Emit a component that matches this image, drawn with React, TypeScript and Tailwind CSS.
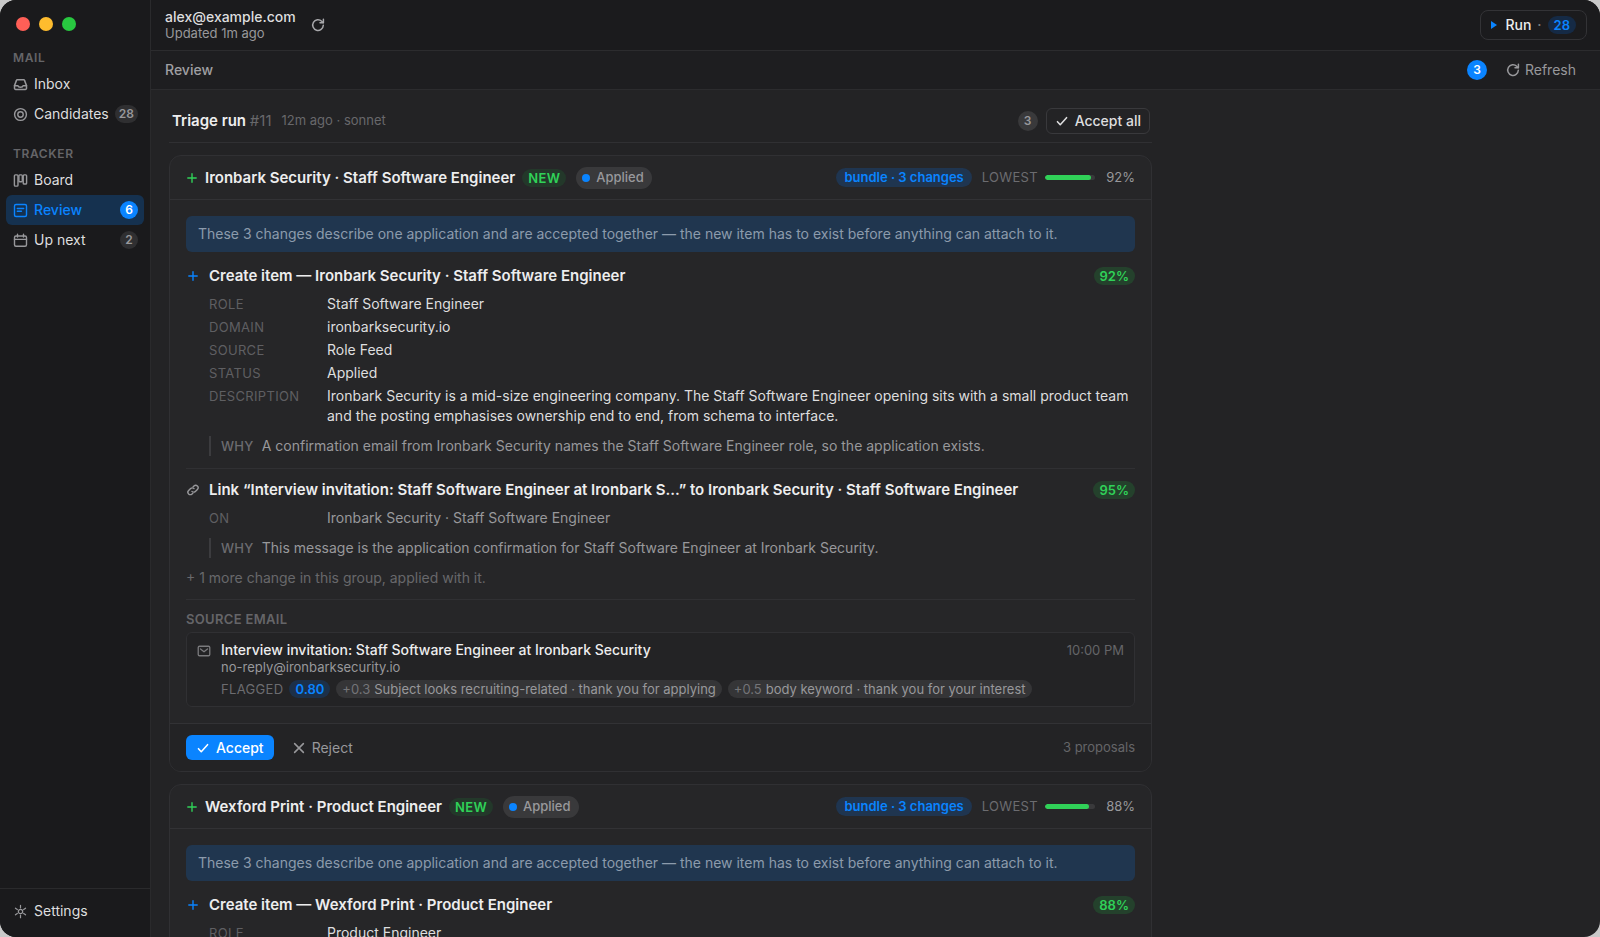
import type { ReactNode } from "react";

type IconProps = { className?: string };

function Glyph({ className, children, width = 1.5 }: IconProps & { children: ReactNode; width?: number }) {
  return (
    <svg
      viewBox="0 0 16 16"
      fill="none"
      stroke="currentColor"
      strokeWidth={width}
      strokeLinecap="round"
      strokeLinejoin="round"
      aria-hidden="true"
      className={`shrink-0 ${className ?? "size-[15px]"}`}
    >
      {children}
    </svg>
  );
}

const InboxIcon = () => (
  <Glyph width={1.6}>
    <path d="M1.600 9.200 3.700 3.600a1 1 0 0 1 .9-.7h6.800a1 1 0 0 1 .9.700L14.400 9.200V12a1.200 1.200 0 0 1-1.200 1.200H2.800A1.200 1.200 0 0 1 1.600 12Z" />
    <path d="M1.600 9.200h3.600c.3 1.200 1.200 1.800 2.800 1.800s2.500-.6 2.800-1.800h3.600" />
  </Glyph>
);
const TargetIcon = () => (
  <Glyph>
    <circle cx="8" cy="8" r="6.300" />
    <circle cx="8" cy="8" r="2.900" />
  </Glyph>
);
const BoardIcon = () => (
  <Glyph>
    <rect x="1.500" y="2" width="3.800" height="12" rx="1" />
    <rect x="6.300" y="2" width="3.600" height="7.400" rx="1" />
    <rect x="10.900" y="2" width="3.600" height="9.800" rx="1" />
  </Glyph>
);
const ReviewIcon = () => (
  <Glyph>
    <rect x="1.600" y="1.600" width="12.800" height="12.800" rx="1.600" />
    <path d="M4.600 5.900h6.800M4.600 8.800h4.400" />
  </Glyph>
);
const CalendarIcon = () => (
  <Glyph>
    <rect x="1.600" y="3.200" width="12.800" height="11" rx="1.600" />
    <path d="M1.600 6.800h12.800M4.800 1.400v2.800M11.200 1.400v2.800" />
  </Glyph>
);
const GearIcon = () => (
  <Glyph width={1.3}>
    <circle cx="8" cy="8" r="2.300" />
    <path d="M8 1.400v2.700M8 11.900v2.700M2.600 4.500l2 1.400M11.400 10.100l2 1.400M2.600 11.500l2-1.400M11.400 5.900l2-1.400" />
  </Glyph>
);
const RefreshIcon = ({ className }: IconProps) => (
  <Glyph className={className}>
    <path d="M13.300 8.300A5.300 5.300 0 1 1 11.700 4.300L13.200 5.600" />
    <path d="M13.400 2.300v3.400H10" />
  </Glyph>
);
const PlusIcon = ({ className }: IconProps) => (
  <Glyph className={className} width={1.6}>
    <path d="M8 3.200v9.600M3.200 8h9.600" />
  </Glyph>
);
const CheckIcon = ({ className }: IconProps) => (
  <Glyph className={className} width={1.8}>
    <path d="m2.800 8.800 3.200 3.400 7.200-8" />
  </Glyph>
);
const CrossIcon = ({ className }: IconProps) => (
  <Glyph className={className} width={1.8}>
    <path d="m3 3 10 10M13 3 3 13" />
  </Glyph>
);
const LinkIcon = ({ className }: IconProps) => (
  <Glyph className={className} width={1.6}>
    <path d="M6.800 9.600a2.700 2.700 0 0 0 3.900.1l2.300-2.300a2.750 2.750 0 0 0-3.900-3.900L8.200 4.400" />
    <path d="M9.200 6.400a2.700 2.700 0 0 0-3.900-.1L3 8.600a2.750 2.750 0 0 0 3.900 3.900l.9-.9" />
  </Glyph>
);
const MailIcon = ({ className }: IconProps) => (
  <Glyph className={className} width={1.5}>
    <rect x="1.400" y="2.600" width="13.200" height="10.800" rx="1.500" />
    <path d="m4 5.600 4 3.200 4-3.200" />
  </Glyph>
);

type NavItem = { label: string; icon: ReactNode; count?: number; active?: boolean };

function NavSection({ title, items }: { title: string; items: NavItem[] }) {
  return (
    <section>
      <h2 className="px-[7px] text-xs leading-4 font-semibold tracking-wider text-[#656568]">{title}</h2>
      <ul className="mt-[3px] flex flex-col">
        {items.map((item) => (
          <li key={item.label}>
            <a
              href="#"
              aria-current={item.active ? "page" : undefined}
              className={`flex h-[30px] items-center gap-1.5 rounded-md pr-1.5 pl-[7px] text-sm ${
                item.active ? "bg-[#15314f] font-medium text-[#0a84ff]" : "text-[#dededf]"
              }`}
            >
              <span className={`flex ${item.active ? "text-[#0a84ff]" : "text-[#98989b]"}`}>{item.icon}</span>
              <span className="flex-1">{item.label}</span>
              {item.count !== undefined && (
                <span
                  className={`flex h-[18px] min-w-[18px] items-center justify-center rounded-full px-1 text-xs font-semibold ${
                    item.active ? "bg-[#0a84ff] text-white" : "bg-[#2f2f31] text-[#98989b]"
                  }`}
                >
                  {item.count}
                </span>
              )}
            </a>
          </li>
        ))}
      </ul>
    </section>
  );
}

function Sidebar() {
  return (
    <nav className="flex w-[151px] shrink-0 flex-col border-r border-[#2a2a2c] bg-[#1a1a1c]">
      <div className="flex gap-[9px] px-4 pt-[17px]">
        <span className="size-3.5 rounded-full bg-[#ff5f57]" />
        <span className="size-3.5 rounded-full bg-[#febc2e]" />
        <span className="size-3.5 rounded-full bg-[#28c840]" />
      </div>
      <div className="mt-[19px] flex flex-1 flex-col gap-[17px] px-1.5">
        <NavSection
          title="MAIL"
          items={[
            { label: "Inbox", icon: <InboxIcon /> },
            { label: "Candidates", icon: <TargetIcon />, count: 28 },
          ]}
        />
        <NavSection
          title="TRACKER"
          items={[
            { label: "Board", icon: <BoardIcon /> },
            { label: "Review", icon: <ReviewIcon />, count: 6, active: true },
            { label: "Up next", icon: <CalendarIcon />, count: 2 },
          ]}
        />
      </div>
      <div className="border-t border-[#2a2a2c] px-1.5 pt-[7px] pb-[11px]">
        <a href="#" className="flex h-[30px] items-center gap-1.5 px-[7px] text-sm text-[#dededf]">
          <span className="flex text-[#98989b]">
            <GearIcon />
          </span>
          Settings
        </a>
      </div>
    </nav>
  );
}

function Fact({ label, children, muted }: { label: string; children: ReactNode; muted?: boolean }) {
  return (
    <div className="flex">
      <dt className="w-[118px] shrink-0 text-[13px] leading-5 tracking-wide text-[#5f5f62]">{label}</dt>
      <dd className={`flex-1 text-sm leading-5 ${muted ? "text-[#98989b]" : "text-[#dededf]"}`}>{children}</dd>
    </div>
  );
}

function Why({ children }: { children: ReactNode }) {
  return (
    <p className="ml-[23px] border-l-2 border-[#3c3c3f] pl-2.5 text-sm leading-5 text-[#98989b]">
      <span className="mr-2 text-[13px] font-medium tracking-wide text-[#6c6c70]">WHY</span>
      {children}
    </p>
  );
}

function ChangeTitle({ icon, title, score }: { icon: ReactNode; title: string; score: number }) {
  return (
    <div className="flex items-center">
      <span className="flex w-[23px] shrink-0">{icon}</span>
      <h4 className="flex-1 text-[15px] leading-5 font-semibold text-[#ededee]">{title}</h4>
      <span className="rounded-full bg-[#24412c] px-1.5 text-[13px] leading-[18px] font-semibold text-[#30d158]">
        {score}%
      </span>
    </div>
  );
}

type Flag = { weight: string; text: string };
type Proposal = {
  company: string;
  role: string;
  domain: string;
  description: string;
  confidence: number;
  linkConfidence: number;
  subjectShort: string;
  subject: string;
  time: string;
  flags: Flag[];
};

function ProposalCard({ p }: { p: Proposal }) {
  const name = `${p.company} · ${p.role}`;
  return (
    <article className="shrink-0 overflow-hidden rounded-xl border border-[#303033] bg-[#262628]">
      <header className="flex h-11 items-center border-b border-[#323235] pr-4 pl-[15px]">
        <PlusIcon className="size-3.5 text-[#30d158]" />
        <h3 className="ml-1.5 text-[15px] leading-5 font-semibold text-[#ededee]">{name}</h3>
        <span className="ml-[7px] rounded-full bg-[#23382a] px-1.5 text-[13px] leading-[18px] font-semibold tracking-wide text-[#30d158]">
          NEW
        </span>
        <span className="ml-2.5 flex h-[22px] items-center gap-1.5 rounded-full bg-[#39393b] px-2 pl-1.5 text-[13px] font-medium text-[#98989b]">
          <span className="size-2 rounded-full bg-[#0a84ff]" />
          Applied
        </span>
        <span className="ml-auto rounded-full bg-[#1f3550] px-2 text-[13px] leading-[19px] font-semibold text-[#0a84ff]">
          bundle · 3 changes
        </span>
        <span className="ml-2.5 text-[13px] tracking-wide text-[#6c6c70]">LOWEST</span>
        <span className="ml-[7px] h-[5px] w-[50px] overflow-hidden rounded-full bg-[#39393b]">
          <span className="block h-full rounded-full bg-[#30d158]" style={{ width: `${p.confidence}%` }} />
        </span>
        <span className="w-10 text-right text-[13px] text-[#98989b]">{p.confidence}%</span>
      </header>

      <div className="px-4 pt-4 pb-4">
        <p className="rounded-md bg-[#20364f] px-3 py-2 text-sm leading-5 text-[#8c9bac]">
          These 3 changes describe one application and are accepted together — the new item has to exist before
          anything can attach to it.
        </p>

        <div className="mt-3.5">
          <ChangeTitle
            icon={<PlusIcon className="size-3.5 text-[#0a84ff]" />}
            title={`Create item — ${name}`}
            score={p.confidence}
          />
          <dl className="mt-2 flex flex-col gap-[3px] pl-[23px]">
            <Fact label="ROLE">{p.role}</Fact>
            <Fact label="DOMAIN">{p.domain}</Fact>
            <Fact label="SOURCE">Role Feed</Fact>
            <Fact label="STATUS">Applied</Fact>
            <Fact label="DESCRIPTION">{p.description}</Fact>
          </dl>
          <div className="mt-2.5">
            <Why>
              A confirmation email from {p.company} names the {p.role} role, so the application exists.
            </Why>
          </div>
        </div>

        <div className="mt-3 border-t border-[#303033] pt-[11px]">
          <ChangeTitle
            icon={<LinkIcon className="size-3.5 text-[#98989b]" />}
            title={`Link “${p.subjectShort}...” to ${name}`}
            score={p.linkConfidence}
          />
          <dl className="mt-2 pl-[23px]">
            <Fact label="ON" muted>
              {name}
            </Fact>
          </dl>
          <div className="mt-2.5">
            <Why>
              This message is the application confirmation for {p.role} at {p.company}.
            </Why>
          </div>
        </div>

        <p className="mt-2.5 text-sm leading-5 text-[#68686b]">+ 1 more change in this group, applied with it.</p>

        <section className="mt-[11px] border-t border-[#303033] pt-2.5">
          <h4 className="text-[13px] leading-[18px] font-semibold tracking-wide text-[#656568]">SOURCE EMAIL</h4>
          <div className="mt-1 flex gap-2.5 rounded-md border border-[#303033] bg-[#232325] px-2.5 py-2">
            <MailIcon className="mt-[3px] size-3.5 text-[#7a7a7d]" />
            <div className="flex-1">
              <div className="flex items-center">
                <a href="#" className="flex-1 text-sm leading-[18px] font-medium text-[#ededee]">
                  {p.subject}
                </a>
                <time className="text-[13px] leading-[18px] text-[#656568]">{p.time}</time>
              </div>
              <p className="text-[13px] leading-4 text-[#98989b]">no-reply@{p.domain}</p>
              <div className="mt-[5px] flex items-center gap-1.5 text-[13px] leading-[18px]">
                <span className="tracking-wide text-[#6c6c70]">FLAGGED</span>
                <span className="rounded-full bg-[#1c3049] px-1.5 font-semibold text-[#0a84ff]">0.80</span>
                {p.flags.map((flag) => (
                  <span key={flag.text} className="flex gap-1 rounded-full bg-[#353537] px-1.5 text-[#98989b]">
                    <span className="text-[#747477]">{flag.weight}</span>
                    {flag.text}
                  </span>
                ))}
              </div>
            </div>
          </div>
        </section>
      </div>

      <footer className="flex h-12 items-center border-t border-[#323235] bg-[#232325] px-4">
        <button
          type="button"
          className="flex h-[25px] items-center gap-1.5 rounded-md bg-[#0a84ff] px-2.5 text-sm font-medium text-white"
        >
          <CheckIcon className="size-3.5" />
          Accept
        </button>
        <button type="button" className="ml-2.5 flex h-[25px] items-center gap-1.5 px-2 text-sm text-[#98989b]">
          <CrossIcon className="size-3.5" />
          Reject
        </button>
        <span className="ml-auto text-[13px] text-[#656568]">3 proposals</span>
      </footer>
    </article>
  );
}

const proposals: Proposal[] = [
  {
    company: "Ironbark Security",
    role: "Staff Software Engineer",
    domain: "ironbarksecurity.io",
    description:
      "Ironbark Security is a mid-size engineering company. The Staff Software Engineer opening sits with a small product team and the posting emphasises ownership end to end, from schema to interface.",
    confidence: 92,
    linkConfidence: 95,
    subjectShort: "Interview invitation: Staff Software Engineer at Ironbark S",
    subject: "Interview invitation: Staff Software Engineer at Ironbark Security",
    time: "10:00 PM",
    flags: [
      { weight: "+0.3", text: "Subject looks recruiting-related · thank you for applying" },
      { weight: "+0.5", text: "body keyword · thank you for your interest" },
    ],
  },
  {
    company: "Wexford Print",
    role: "Product Engineer",
    domain: "wexfordprint.com",
    description: "Wexford Print is a mid-size engineering company.",
    confidence: 88,
    linkConfidence: 95,
    subjectShort: "Interview invitation: Product Engineer at Wexford",
    subject: "Interview invitation: Product Engineer at Wexford Print",
    time: "10:00 PM",
    flags: [{ weight: "+0.5", text: "body keyword · thank you for your interest" }],
  },
];

export default function App() {
  return (
    <div className="h-screen bg-[#c9c9c9] font-['Inter',sans-serif]">
      <div className="flex h-full overflow-hidden rounded-2xl bg-[#232325]">
        <Sidebar />
        <div className="flex min-w-0 flex-1 flex-col">
          <header className="flex h-[51px] shrink-0 items-center border-b border-[#2c2c2e] bg-[#1b1b1d] pr-[13px] pl-3.5">
            <div>
              <p className="text-sm leading-4 font-medium text-[#dededf]">alex@example.com</p>
              <p className="text-[13px] leading-4 text-[#98989b]">Updated 1m ago</p>
            </div>
            <button type="button" aria-label="Sync mailbox" className="ml-3.5 text-[#a8a8ab]">
              <RefreshIcon className="size-4" />
            </button>
            <button
              type="button"
              className="ml-auto flex h-[30px] items-center rounded-lg border border-[#333336] px-2.5 text-sm font-medium text-[#ededee]"
            >
              <svg viewBox="0 0 6 8" aria-hidden="true" className="mr-2 h-2 w-1.5 fill-[#0a84ff]">
                <path d="M0 0 6 4 0 8Z" />
              </svg>
              Run
              <span className="mx-1.5 text-[#7a7a7d]">·</span>
              <span className="rounded-full bg-[#152a45] px-1.5 text-[13px] leading-[18px] font-semibold text-[#0a84ff]">
                28
              </span>
            </button>
          </header>

          <div className="flex h-[39px] shrink-0 items-center border-b border-[#2c2c2e] bg-[#1e1e20] pr-6 pl-3.5">
            <h1 className="text-sm font-medium text-[#a0a0a3]">Review</h1>
            <span className="ml-auto flex size-5 items-center justify-center rounded-full bg-[#0a84ff] text-xs font-semibold text-white">
              3
            </span>
            <button type="button" className="ml-[18px] flex items-center gap-1 text-sm text-[#98989b]">
              <RefreshIcon className="size-4" />
              Refresh
            </button>
          </div>

          <main className="min-h-0 flex-1 overflow-y-auto px-[18px] pb-4 [scrollbar-width:none]">
            <div className="max-w-[983px]">
              <div className="mt-2.5 flex h-[43px] items-center border-b border-[#303033] pr-0.5 pl-[3px]">
                <h2 className="text-[15px] font-semibold text-[#ededee]">
                  Triage run <span className="font-normal text-[#68686b]">#11</span>
                </h2>
                <span className="ml-2.5 text-[13px] text-[#68686b]">12m ago · sonnet</span>
                <span className="ml-auto flex size-5 items-center justify-center rounded-full bg-[#39393b] text-xs font-semibold text-[#98989b]">
                  3
                </span>
                <button
                  type="button"
                  className="ml-2 flex h-[26px] items-center gap-1.5 rounded-md border border-[#39393c] px-2 text-sm font-medium text-[#dededf]"
                >
                  <CheckIcon className="size-3.5" />
                  Accept all
                </button>
              </div>
              <div className="mt-3 flex flex-col gap-3">
                {proposals.map((p) => (
                  <ProposalCard key={p.company} p={p} />
                ))}
              </div>
            </div>
          </main>
        </div>
      </div>
    </div>
  );
}
